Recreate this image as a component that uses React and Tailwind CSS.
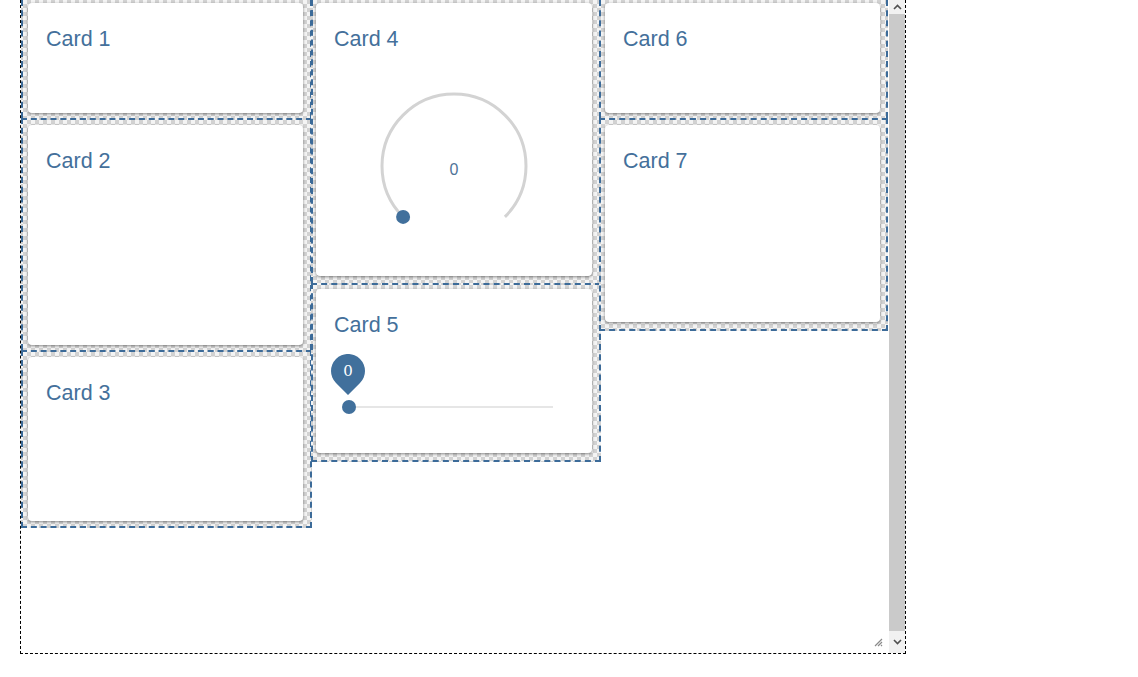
import React from "react";

const checker =
  "bg-[image:repeating-conic-gradient(#d2d2d2_0%_25%,#f4f4f4_0%_50%)] bg-size-[8px_8px]";

function Card({ title, h, children }) {
  return (
    <div
      className="bg-white rounded-[4px] shadow-[0_1px_3px_rgba(0,0,0,0.45)] px-[18px] pt-[24px] flex flex-col relative"
      style={{ height: h }}
    >
      <div className="text-[21.5px] leading-[25px] text-[#44709b]">{title}</div>
      {children}
    </div>
  );
}

function Gauge() {
  return (
    <div className="flex justify-center mt-[34px]">
      <svg width="160" height="160" viewBox="0 0 160 160">
        <path
          d="M29.1 130.9 A72 72 0 1 1 130.9 130.9"
          fill="none"
          stroke="#d3d3d3"
          strokeWidth="3"
        />
        <circle cx="29.1" cy="130.9" r="7" fill="#41709c" />
        <text
          x="80"
          y="89"
          textAnchor="middle"
          fontSize="16"
          fill="#4f7398"
          fontFamily="Liberation Sans, Arial, sans-serif"
        >
          0
        </text>
      </svg>
    </div>
  );
}

function Slider() {
  return (
    <div className="relative mt-[6px] h-[70px]">
      <div className="absolute left-[-3px] top-[10px] w-[34px] h-[42px]">
        <svg width="34" height="42" viewBox="0 0 34 42">
          <path d="M17 41 L5 29 A17 17 0 1 1 29 29 Z" fill="#41709c" />
        </svg>
        <div className="absolute left-0 top-0 w-[34px] h-[34px] flex items-center justify-center text-white text-[15px] font-['DejaVu_Serif',serif]">
          0
        </div>
      </div>
      <div className="absolute left-[15px] right-[21px] top-[62px] h-[2px] bg-[#e6e6e6]" />
      <div className="absolute left-[8px] top-[56px] w-[14px] h-[14px] rounded-full bg-[#41709c]" />
    </div>
  );
}

export default function App() {
  return (
    <div className="w-full h-[677px] bg-white font-['Liberation_Sans',Arial,sans-serif]">
      <div className="ml-[20px] w-[886px] h-[654px] border-l border-r border-b border-dashed border-black flex">
        <div className="flex-1 overflow-hidden relative flex items-start bg-white">
          {/* Column 1 */}
          <div className="w-[291px] flex flex-col shrink-0">
            <div className={`border-x-2 border-dashed border-[#3c6b99] pt-[3px] pb-[5px] pl-[5px] pr-[7px] ${checker}`}>
              <Card title="Card 1" h={110} />
            </div>
            <div className={`border-x-2 border-t-2 border-dashed border-[#3c6b99] pt-[5px] pb-[5px] pl-[5px] pr-[7px] ${checker}`}>
              <Card title="Card 2" h={220} />
            </div>
            <div className={`border-2 border-dashed border-[#3c6b99] pt-[5px] pb-[5px] pl-[5px] pr-[7px] ${checker}`}>
              <Card title="Card 3" h={164} />
            </div>
          </div>
          {/* Column 2 */}
          <div className="w-[290px] -ml-[1px] flex flex-col shrink-0 relative">
            <div className={`border-x-2 border-dashed border-[#3c6b99] pt-[3px] pb-[7px] pl-[3px] pr-[7px] ${checker}`}>
              <Card title="Card 4" h={273}>
                <Gauge />
              </Card>
            </div>
            <div className={`border-2 border-dashed border-[#3c6b99] pt-[4px] pb-[7px] pl-[3px] pr-[7px] ${checker}`}>
              <Card title="Card 5" h={164}>
                <Slider />
              </Card>
            </div>
          </div>
          {/* Column 3 */}
          <div className="w-[289px] -ml-[2px] flex flex-col shrink-0 relative">
            <div className={`border-x-2 border-dashed border-[#3c6b99] pt-[3px] pb-[5px] pl-[4px] pr-[6px] ${checker}`}>
              <Card title="Card 6" h={110} />
            </div>
            <div className={`border-2 border-dashed border-[#3c6b99] pt-[5px] pb-[7px] pl-[4px] pr-[6px] ${checker}`}>
              <Card title="Card 7" h={197} />
            </div>
          </div>
          {/* resize grip */}
          <svg
            className="absolute right-[6px] bottom-[6px]"
            width="10"
            height="10"
            viewBox="0 0 10 10"
          >
            <path d="M9 2 L2 9 M9 5 L5 9 M9 8 L8 9" stroke="#8a8a8a" strokeWidth="1.2" />
          </svg>
        </div>
        {/* Scrollbar */}
        <div className="w-[16px] flex flex-col bg-[#f1f1f1] shrink-0">
          <div className="h-[14px] flex items-center justify-center">
            <svg width="9" height="6" viewBox="0 0 9 6">
              <path d="M1 5 L4.5 1.5 L8 5" fill="none" stroke="#505050" strokeWidth="1.6" />
            </svg>
          </div>
          <div className="flex-1 bg-[#cacaca]" />
          <div className="h-[22px] flex items-center justify-center">
            <svg width="9" height="6" viewBox="0 0 9 6">
              <path d="M1 1 L4.5 4.5 L8 1" fill="none" stroke="#505050" strokeWidth="1.6" />
            </svg>
          </div>
        </div>
      </div>
    </div>
  );
}
